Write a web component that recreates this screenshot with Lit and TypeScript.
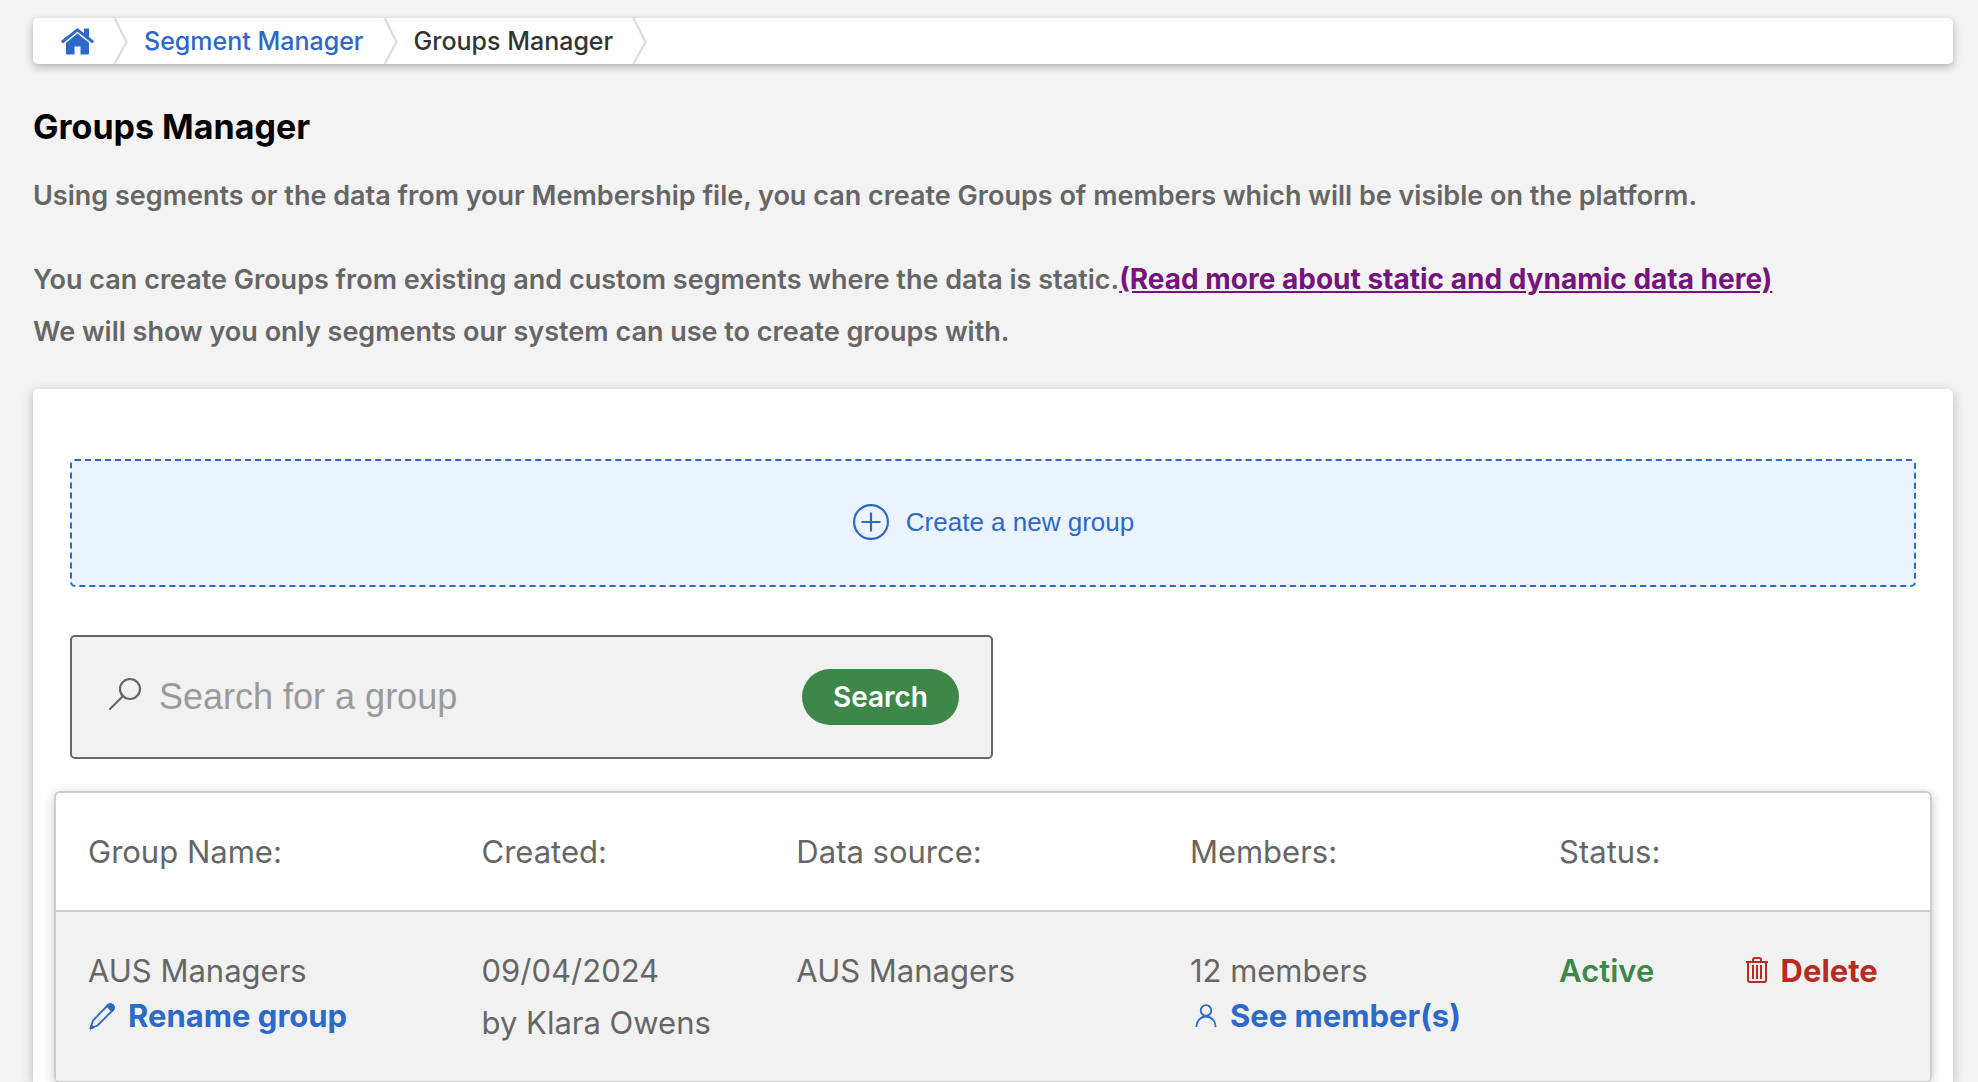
import { LitElement, html, css } from "lit";
import { customElement, state } from "lit/decorators.js";

interface Group {
  name: string;
  created: string;
  author: string;
  source: string;
  members: number;
  status: string;
}

const chevron = html`<svg class="chevron" viewBox="0 0 15 46" aria-hidden="true">
  <path d="M1.5 0 L13.500 24 L1.5 46" fill="none" stroke="#dedede" stroke-width="2.4" />
</svg>`;

@customElement("app-root")
export class AppRoot extends LitElement {
  static styles = css`
    :host {
      display: block;
      box-sizing: border-box;
      min-height: 100vh;
      padding: 18px 25px 0 33px;
      background: #f3f3f3;
      color: #666;
      font-family: Inter, "Liberation Sans", sans-serif;
      font-size: 31px;
      line-height: 52px;
      overflow: hidden;
    }
    * {
      box-sizing: border-box;
    }
    a {
      color: #2c69c8;
      text-decoration: none;
    }
    button,
    input {
      font: inherit;
      margin: 0;
    }
    button {
      cursor: pointer;
    }
    svg {
      flex: none;
      display: block;
    }
    .crumbs {
      background: #fff;
      border-radius: 5px;
      box-shadow: 0 3px 8px rgba(0, 0, 0, 0.28);
      font-size: 25px;
      font-weight: 500;
      line-height: 48px;
    }
    .trail {
      display: flex;
      align-items: center;
      list-style: none;
      margin: 0;
      padding: 0 0 0 28px;
      height: 46px;
    }
    .crumb {
      display: flex;
      align-items: center;
      gap: 19px;
      margin-right: 16px;
      color: #333;
    }
    .home {
      width: 33px;
      height: 27px;
    }
    .chevron {
      width: 15px;
      height: 46px;
    }
    .title {
      margin: 37px 0 0;
      color: #000;
      font-size: 34px;
      line-height: 52px;
      font-weight: 700;
    }
    .intro {
      margin: 17px 0 32px;
      font-size: 27px;
      font-weight: 600;
    }
    .intro:last-of-type {
      margin-bottom: 31px;
    }
    .more {
      color: #75147c;
      font-size: 28px;
      font-weight: 700;
      line-height: 1;
      text-decoration: underline;
    }
    .panel {
      background: #fff;
      border-radius: 5px 5px 0 0;
      box-shadow: 0 3px 12px rgba(0, 0, 0, 0.25);
      padding: 70px 21px 0;
    }
    .tools {
      padding: 0 16px;
    }
    .create {
      display: flex;
      align-items: center;
      justify-content: center;
      gap: 16px;
      width: 100%;
      height: 128px;
      padding: 0 0 2px;
      background: #ebf3ff;
      border: 2px dashed #2c69c8;
      border-radius: 5px;
      color: #2c69c8;
      font-family: "Liberation Sans", Arial, sans-serif;
      font-size: 26px;
    }
    .search {
      display: flex;
      align-items: center;
      width: 50%;
      height: 124px;
      margin-top: 48px;
      padding: 0 32px 0 36px;
      background: #f1f1f1;
      border: 2px solid #666;
      border-radius: 5px;
    }
    .lens {
      width: 34px;
      height: 34px;
      margin-bottom: 6px;
    }
    .field {
      flex: 1;
      min-width: 0;
      height: 60px;
      padding: 0 17px;
      border: 0;
      outline: 0;
      background: transparent;
      color: #666;
      font-family: "Liberation Sans", Arial, sans-serif;
      font-size: 36px;
    }
    .field::placeholder {
      color: #999b9a;
      opacity: 1;
    }
    .submit {
      height: 56px;
      padding: 0 31px;
      border: 0;
      border-radius: 28px;
      background: #3d8748;
      color: #fff;
      font-size: 28px;
      font-weight: 600;
      line-height: 56px;
    }
    .card {
      margin-top: 32px;
      border: 2px solid #ccc;
      border-radius: 6px;
      box-shadow: 0 3px 12px rgba(0, 0, 0, 0.22);
      overflow: hidden;
    }
    .groups {
      width: 100%;
      table-layout: fixed;
      border-collapse: separate;
      border-spacing: 0;
      text-align: left;
    }
    .groups th {
      height: 117px;
      padding: 0 0 0 32px;
      font-weight: 400;
    }
    .groups td {
      height: 171px;
      padding: 33px 0 0 32px;
      vertical-align: top;
      background: #f1f1f1;
      border-top: 2px solid #ccc;
      white-space: nowrap;
    }
    .wide {
      width: 21%;
    }
    .mid {
      width: 16.8%;
    }
    .member-col {
      width: 19.7%;
    }
    .status-col {
      width: 9.9%;
    }
    .act {
      display: flex;
      align-items: center;
      gap: 12px;
      padding: 0;
      border: 0;
      background: none;
      color: #2c69c8;
      font-weight: 700;
      line-height: 38px;
    }
    .pencil,
    .person {
      width: 28px;
      height: 32px;
    }
    .bin {
      width: 24px;
      height: 32px;
    }
    .groups .active {
      color: #3d8748;
      font-weight: 600;
    }
    .delete {
      color: #bb2a22;
      line-height: 52px;
    }
  `;

  @state() private query = "";

  private groups: Group[] = [
    { name: "AUS Managers", created: "09/04/2024", author: "Klara Owens", source: "AUS Managers", members: 12, status: "Active" },
  ];

  private row(g: Group) {
    return html`<tr>
      <td>
        ${g.name}
        <button class="act" type="button">
          <svg class="pencil" viewBox="0 0 28 32" fill="none" stroke="currentColor" stroke-width="1.8" stroke-linejoin="round" aria-hidden="true">
            <path d="M2.500 28.500 L5 20.500 L20 5 Q22.500 3.200 24.800 5.200 Q27 7.500 25 10 L9.500 25.500 Z" />
            <path d="M19 6 L20.500 4.800 Q22.500 3.200 24.800 5.200 Q27 7.500 25 10 L23.800 11 Z M2.500 28.500 L3.500 25.500 L5.500 27.500 Z" fill="currentColor" />
          </svg>
          Rename group
        </button>
      </td>
      <td>${g.created}<br />by ${g.author}</td>
      <td>${g.source}</td>
      <td>
        ${g.members} members
        <button class="act" type="button">
          <svg class="person" viewBox="0 0 28 32" fill="none" stroke="currentColor" stroke-width="1.8" aria-hidden="true">
            <circle cx="16" cy="10.500" r="5.300" />
            <path d="M6.500 27 V26 A9.500 9.500 0 0 1 25.500 26 V27" />
          </svg>
          See member(s)
        </button>
      </td>
      <td class="active">${g.status}</td>
      <td>
        <button class="act delete" type="button">
          <svg class="bin" viewBox="0 0 24 32" fill="none" stroke="currentColor" stroke-width="2" aria-hidden="true">
            <path d="M1 7 H23 M8 7 V5 Q8 3 10 3 H14 Q16 3 16 5 V7 M3 7 V25 Q3 27 5 27 H19 Q21 27 21 25 V7 M8 10 V24 M12 10 V24 M16 10 V24" />
          </svg>
          Delete
        </button>
      </td>
    </tr>`;
  }

  render() {
    const shown = this.groups.filter((g) => g.name.toLowerCase().includes(this.query.toLowerCase()));
    return html`
      <nav class="crumbs" aria-label="Breadcrumb">
        <ol class="trail">
          <li class="crumb">
            <a href="#home" aria-label="Home">
              <svg class="home" viewBox="0 0 33 27" fill="#2c69c8" aria-hidden="true">
                <path d="M1.800 13.500 L16.500 1.800 L31.200 13.500" fill="none" stroke="#2c69c8" stroke-width="3" stroke-linecap="round" stroke-linejoin="round" />
                <path d="M23 0.500 H28 V11 L23 7 Z" />
                <path d="M16.500 5.500 L28 14.700 V25.500 Q28 26.500 27 26.500 H19.500 V18.500 H13.500 V26.500 H6 Q5 26.500 5 25.500 V14.700 Z" />
              </svg>
            </a>
            ${chevron}
          </li>
          <li class="crumb"><a href="#segments">Segment Manager</a>${chevron}</li>
          <li class="crumb" aria-current="page">Groups Manager${chevron}</li>
        </ol>
      </nav>
      <h1 class="title">Groups Manager</h1>
      <p class="intro">
        Using segments or the data from your Membership file, you can create Groups of members which will be visible on the platform.
      </p>
      <p class="intro">
        You can create Groups from existing and custom segments where the data is static.<a class="more" href="#static-data">(Read more about static and dynamic data here)</a><br />
        We will show you only segments our system can use to create groups with.
      </p>
      <main class="panel">
        <div class="tools">
          <button class="create" type="button">
            <svg width="38" height="38" viewBox="0 0 38 38" fill="none" stroke="currentColor" stroke-width="2.200" aria-hidden="true">
              <circle cx="19" cy="19" r="16.900" />
              <path d="M19 9.500 V28.500 M9.500 19 H28.500" />
            </svg>
            Create a new group
          </button>
          <form class="search" role="search" @submit=${(e: Event) => e.preventDefault()}>
            <svg class="lens" viewBox="0 0 34 34" fill="none" stroke="#666" stroke-width="2.200" stroke-linecap="round" aria-hidden="true">
              <circle cx="22" cy="12" r="10" />
              <path d="M15 19 L2 32" />
            </svg>
            <input
              class="field"
              type="text"
              aria-label="Search for a group"
              placeholder="Search for a group"
              .value=${this.query}
              @input=${(e: Event) => (this.query = (e.target as HTMLInputElement).value)}
            />
            <button class="submit" type="submit">Search</button>
          </form>
        </div>
        <div class="card">
          <table class="groups">
            <thead>
              <tr>
                <th class="wide" scope="col">Group Name:</th>
                <th class="mid" scope="col">Created:</th>
                <th class="wide" scope="col">Data source:</th>
                <th class="member-col" scope="col">Members:</th>
                <th class="status-col" scope="col">Status:</th>
                <th scope="col" aria-label="Actions"></th>
              </tr>
            </thead>
            <tbody>
              ${shown.map((g) => this.row(g))}
            </tbody>
          </table>
        </div>
      </main>
    `;
  }
}
